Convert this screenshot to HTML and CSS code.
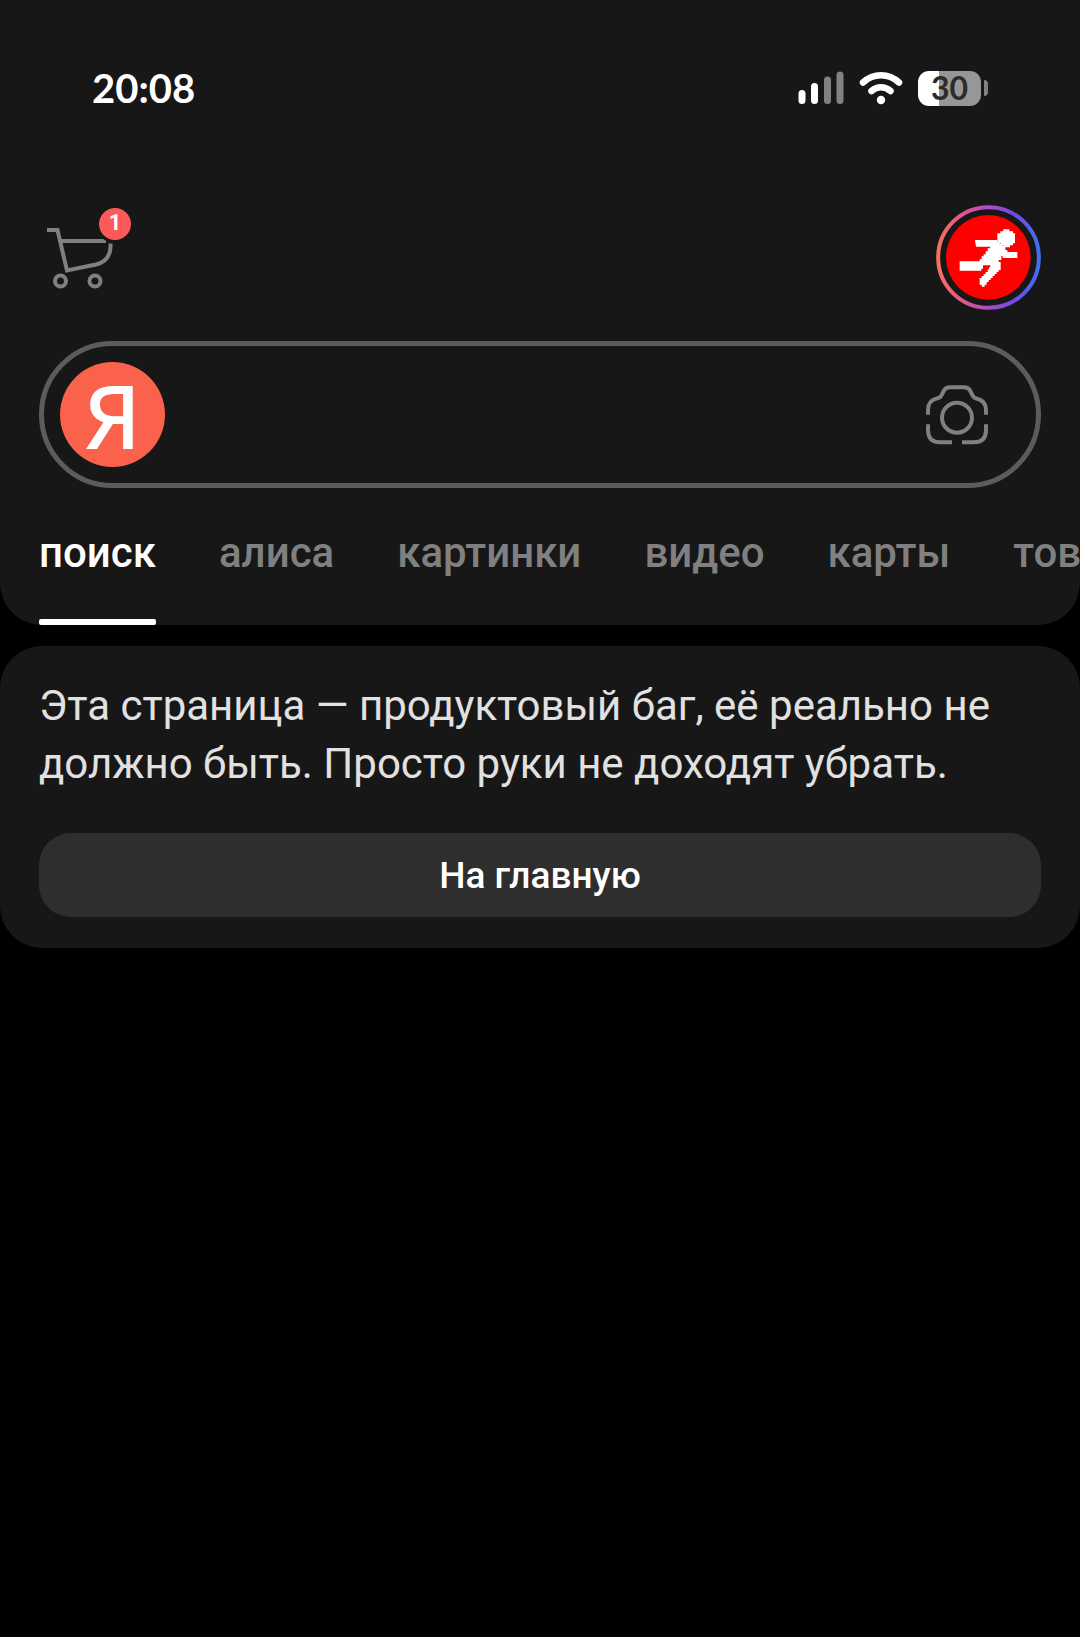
FILE: index.html
```html
<!DOCTYPE html>
<html lang="ru">
<head>
    <meta charset="UTF-8">
    <meta name="viewport" content="width=device-width, initial-scale=1.0">
    <title>Яндекс</title>
    <link rel="stylesheet" href="styles.css">
</head>
<body>
    <header class="header">
        <div class="status-bar">
            <span class="status-time">20:08</span>
            <div class="status-icons">
                <svg class="signal" viewBox="0 0 46 34" aria-hidden="true">
                    <g stroke-width="7" stroke-linecap="round">
                        <path d="M4 22.500V29.500M16.500 15.500V29.500" stroke="#fff"/>
                        <path d="M29.500 9V29.500M42 4V29.500" stroke="#818181"/>
                    </g>
                </svg>
                <svg class="wifi" viewBox="0 0 44 34" aria-hidden="true">
                    <g fill="none" stroke="#fff" stroke-width="6.500" stroke-linecap="round">
                        <path d="M4 11.500C14.500 1.800 29.500 1.800 40 11.500"/>
                        <path d="M12.500 20C18 15 26 15 31.500 20"/>
                    </g>
                    <circle cx="22" cy="29" r="4.200" fill="#fff"/>
                </svg>
                <div class="battery">
                    <span class="battery-level">30</span>
                    <span class="battery-tip"></span>
                </div>
            </div>
        </div>

        <div class="top-row">
            <a class="cart" href="#" aria-label="Корзина">
                <svg class="cart-icon" viewBox="0 0 66 63" aria-hidden="true">
                    <g fill="none" stroke="#808080" stroke-width="4">
                        <path d="M0 3H10.500L20 43.500L49 37.500Q63 34 63.500 20V16.500"/>
                        <path d="M14 14H59"/>
                        <circle cx="13.500" cy="54" r="5.500"/>
                        <circle cx="48" cy="54" r="5.500"/>
                    </g>
                </svg>
                <span class="cart-badge">1</span>
            </a>
            <a class="avatar" href="#" aria-label="Профиль">
                <svg class="avatar-icon" viewBox="48 45 315 315" aria-hidden="true">
                    <defs>
                        <linearGradient id="ring" x1="0" y1="0" x2="1" y2="0">
                            <stop offset="0" stop-color="#f8705a"/>
                            <stop offset="0.250" stop-color="#e0548c"/>
                            <stop offset="0.500" stop-color="#b04cc4"/>
                            <stop offset="0.750" stop-color="#7048e8"/>
                            <stop offset="1" stop-color="#4070f0"/>
                        </linearGradient>
                    </defs>
                    <circle cx="205.500" cy="202.500" r="151" fill="none" stroke="url(#ring)" stroke-width="12"/>
                    <circle cx="205" cy="202" r="127" fill="#f00"/>
                    <path fill="#fff" d="M250 118h18v6h11v6h6v30h-6v6h-9v6h-20v-6h-8v-6h-10v-30h9v-6h9z"/>
                    <path fill="#fff" d="M165 150h66v6h8v6h9v6h8v12h6v6h30v18h-44v-6h-4v12h-8v6h6v24h-6v6h-6v6h-6v6h-6v6h-6v6h-6v6h-6v8h-6v6h-9v-6h-6v-20h6v-6h6v-6h6v-6h6v-8h4v-6h4v-6h-22v10h-5v6h-65v-28h60v-6h6v-9h6v-6h6v-9h6v-9h7v-5h-42z"/>
                </svg>
            </a>
        </div>

        <form class="search">
            <button class="search-logo" type="button" aria-label="Яндекс">Я</button>
            <input class="search-input" type="text" aria-label="Поиск">
            <button class="search-camera" type="button" aria-label="Поиск по картинке">
                <svg class="camera-icon" viewBox="78 168 186 178" aria-hidden="true">
                    <g fill="none" stroke="#808080" stroke-width="12">
                        <path d="M84 256V242Q84 213 111 207Q121 206 125 197L130 187Q136 174 151 174H191Q206 174 212 187L217 197Q221 206 231 208Q258 214 258 242V256"/>
                        <path d="M84 285V302Q84 339 121 339H156M186 339H221Q258 339 258 302V285"/>
                        <circle cx="171" cy="265" r="45"/>
                    </g>
                </svg>
            </button>
        </form>

        <nav class="tabs">
            <a class="tab active" href="#">поиск</a>
            <a class="tab" href="#">алиса</a>
            <a class="tab" href="#">картинки</a>
            <a class="tab" href="#">видео</a>
            <a class="tab" href="#">карты</a>
            <a class="tab" href="#">товары</a>
        </nav>
    </header>

    <main class="card">
        <p class="message">Эта страница — продуктовый баг, её реально не должно быть. Просто руки не доходят убрать.</p>
        <button class="home-button" type="button">На главную</button>
    </main>
</body>
</html>
```

FILE: styles.css
```css
* {
    box-sizing: border-box;
}
body {
    margin: 0;
    background: #000;
    color: #e1e1e1;
    font-family: Roboto, "Noto Sans", sans-serif;
}
button {
    padding: 0;
    border: none;
    font-family: inherit;
    cursor: pointer;
}
svg {
    display: block;
}
.header {
    padding: 68px 39px 0;
    background: #171717;
    border-radius: 0 0 42px 42px;
}

/* Status bar */
.status-bar {
    display: flex;
    justify-content: space-between;
    align-items: center;
    height: 40px;
    padding: 0 53px;
}
.status-time {
    color: #fff;
    font: 700 40px/38px Lato, sans-serif;
}
.status-icons {
    display: flex;
    align-items: center;
    gap: 15px;
}
.signal {
    width: 46px;
    height: 34px;
}
.wifi {
    width: 44px;
    height: 34px;
}
.battery {
    display: flex;
    align-items: center;
    gap: 3px;
}
.battery-level {
    width: 63px;
    height: 35px;
    border-radius: 11px;
    background: linear-gradient(to right, #fff 34%, #979797 34%);
    color: #2b2b2b;
    font: 700 32px/34px Lato, sans-serif;
    text-align: center;
}
.battery-tip {
    width: 4px;
    height: 16px;
    border-radius: 0 4px 4px 0;
    background: #818181;
}

/* Cart and profile */
.top-row {
    display: flex;
    justify-content: space-between;
    align-items: center;
    margin-top: 97px;
}
.cart {
    position: relative;
    padding: 2px 8px 0;
}
.cart-icon {
    width: 66px;
    height: 63px;
}
.cart-badge {
    position: absolute;
    top: -20px;
    right: -13px;
    width: 38px;
    height: 38px;
    border: 3px solid #171717;
    border-radius: 50%;
    background: #fc5959;
    color: #fff;
    font-size: 22px;
    font-weight: 700;
    line-height: 30px;
    text-align: center;
}
.avatar-icon {
    width: 105px;
    height: 105px;
}

/* Search */
.search {
    display: flex;
    align-items: center;
    height: 147px;
    margin-top: 31px;
    padding: 0 48px 0 16px;
    border: 5px solid #5c5c5c;
    border-radius: 74px;
}
.search-logo {
    width: 105px;
    height: 105px;
    border-radius: 50%;
    background: #fa624c;
    color: #fff;
    font-family: "Noto Sans", sans-serif;
    font-size: 88px;
    font-weight: 500;
    line-height: 102px;
}
.search-input {
    flex: 1;
    min-width: 0;
    height: 100%;
    padding: 0 24px;
    border: none;
    outline: none;
    background: transparent;
    color: #fff;
    font: 42px Roboto, sans-serif;
}
.search-camera {
    background: none;
}
.camera-icon {
    width: 62px;
    height: 60px;
}

/* Tabs */
.tabs {
    display: flex;
    gap: 63px;
    margin-right: -39px;
    overflow: hidden;
}
.tab {
    padding: 37px 0 39px;
    border-bottom: 6px solid transparent;
    color: #808080;
    font-size: 42px;
    font-weight: 500;
    line-height: 55px;
    text-decoration: none;
}
.tab.active {
    position: relative;
    color: #fff;
}
.tab.active::after {
    content: "";
    position: absolute;
    left: 0;
    right: 0;
    bottom: -6px;
    height: 6px;
    border-radius: 2px;
    background: #fff;
}

/* Message card */
.card {
    margin-top: 21px;
    padding: 31px 39px 31px;
    background: #171717;
    border-radius: 42px;
}
.message {
    margin: 0;
    font-size: 42px;
    line-height: 58px;
}
.home-button {
    width: 100%;
    height: 84px;
    margin-top: 40px;
    border-radius: 32px;
    background: #2e2e2e;
    color: #fff;
    font-size: 37px;
    font-weight: 500;
}
```
